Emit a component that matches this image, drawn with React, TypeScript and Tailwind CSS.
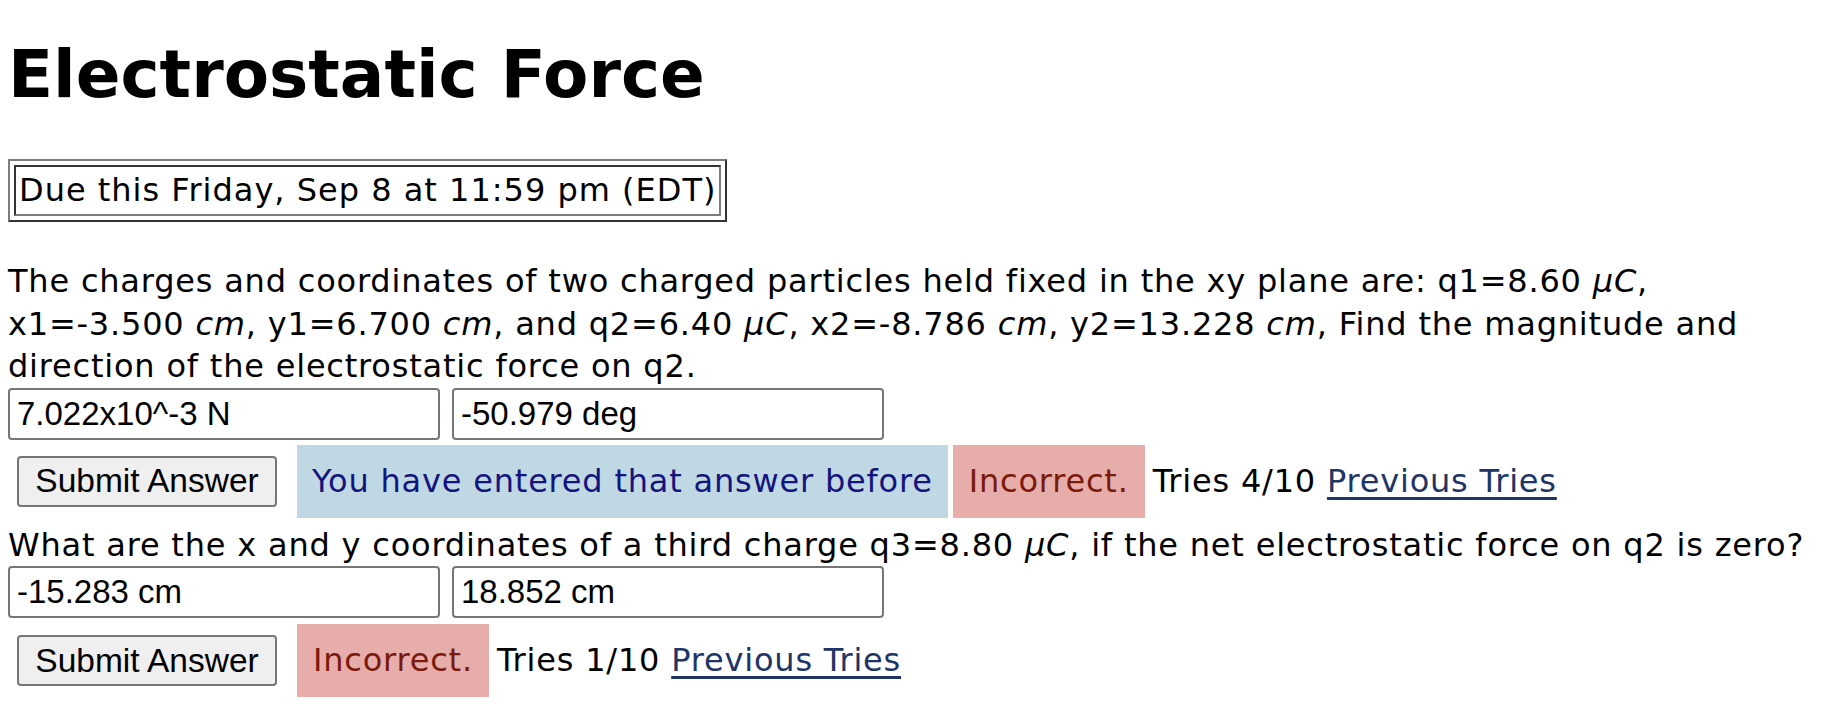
import React from "react";

const Answer = ({ value }: { value: string }) => (
  <input
    readOnly
    value={value}
    className="h-[52px] w-[432px] rounded-[4px] border-2 border-[#767676] bg-white pl-[7px] font-['Liberation_Sans',Arial,sans-serif] text-[33px] tracking-normal text-black outline-none"
  />
);

const SubmitButton = () => (
  <button className="ml-[9px] h-[51px] w-[260px] rounded-[4px] border-2 border-[#767676] bg-[#efefef] font-['Liberation_Sans',Arial,sans-serif] text-[33.5px] leading-none tracking-normal text-black">
    Submit Answer
  </button>
);

const Tries = ({ count }: { count: string }) => (
  <span className="ml-[8px]">
    Tries {count}{" "}
    <a href="#" className="text-[#203466] underline underline-offset-[5px]">
      Previous Tries
    </a>
  </span>
);

export default function App() {
  return (
    <div className="min-h-screen bg-white px-[8px] font-['DejaVu_Sans',Verdana,sans-serif] text-[32px] leading-[42.5px] tracking-[0.8px] text-black">
      <h1 className="pt-[36px] text-[66px] font-bold leading-[78px] tracking-normal">
        Electrostatic Force
      </h1>

      <div className="mt-[45px] w-fit border-2 border-t-[#7c7c7c] border-l-[#7c7c7c] border-b-[#333333] border-r-[#333333] p-[4px]">
        <div className="border-2 border-t-[#333333] border-l-[#333333] border-b-[#7c7c7c] border-r-[#7c7c7c] px-[3px] py-[5px] leading-[37px] tracking-[1px]">
          Due this Friday, Sep 8 at 11:59 pm (EDT)
        </div>
      </div>

      <p className="mt-[38px]">
        The charges and coordinates of two charged particles held fixed in the xy plane are: q1=8.60 <i>μC</i>,
        <br />
        x1=-3.500 <i>cm</i>, y1=6.700 <i>cm</i>, and q2=6.40 <i>μC</i>, x2=-8.786 <i>cm</i>, y2=13.228 <i>cm</i>, Find the magnitude and
        <br />
        direction of the electrostatic force on q2.
      </p>
      <div className="flex gap-[12px]">
        <Answer value="7.022x10^-3 N" />
        <Answer value="-50.979 deg" />
      </div>
      <div className="mt-[5px] flex h-[73px] items-center">
        <SubmitButton />
        <span className="ml-[20px] bg-[#bfd8e4] px-[15px] py-[18px] leading-[37px] text-[#14147e]">
          You have entered that answer before
        </span>
        <span className="ml-[5px] bg-[#e7adab] px-[16px] py-[18px] leading-[37px] text-[#7a1a0c]">
          Incorrect.
        </span>
        <Tries count="4/10" />
      </div>

      <p className="mt-[6px]">
        What are the x and y coordinates of a third charge q3=8.80 <i>μC</i>, if the net electrostatic force on q2 is zero?
      </p>
      <div className="flex gap-[12px]">
        <Answer value="-15.283 cm" />
        <Answer value="18.852 cm" />
      </div>
      <div className="mt-[6px] flex h-[73px] items-center">
        <SubmitButton />
        <span className="ml-[20px] bg-[#e7adab] px-[16px] py-[18px] leading-[37px] text-[#7a1a0c]">
          Incorrect.
        </span>
        <Tries count="1/10" />
      </div>
    </div>
  );
}
